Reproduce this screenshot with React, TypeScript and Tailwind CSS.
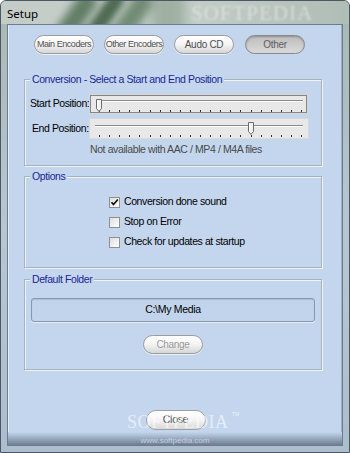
import React from "react";

const sans = "font-['Liberation_Sans',Arial,sans-serif]";

function Pill({ label, pressed, disabled, small }: { label: string; pressed?: boolean; disabled?: boolean; small?: boolean }) {
  const txt = small ? "text-[9px] tracking-[-0.45px]" : "text-[10px] tracking-[-0.3px]";
  if (pressed) {
    return (
      <div className={"h-[19px] w-[60px] rounded-full border border-[#8a8a8a] bg-linear-to-b from-[#bdbdbd] to-[#dadada] shadow-[inset_0_1px_2px_rgba(0,0,0,0.25)] flex items-center justify-center whitespace-nowrap text-[#5e5e5e] " + txt}>
        {label}
      </div>
    );
  }
  return (
    <div
      className={
        "h-[19px] w-[60px] rounded-full border border-[#9c9c9c] bg-linear-to-b from-[#ffffff] via-[#f4f4f4] to-[#d6d6d6] shadow-[0_1px_0_rgba(255,255,255,0.6)] flex items-center justify-center whitespace-nowrap " +
        txt +
        (disabled ? " text-[#9a9a9a]" : " text-[#4f4f4f]")
      }
    >
      {label}
    </div>
  );
}

function Slider({ w, h, trackY, x0, x1, thumbX, thumbY, tickY, focus }: { w: number; h: number; trackY: number; x0: number; x1: number; thumbX: number; thumbY: number; tickY: number; focus?: boolean }) {
  const ticks = Array.from({ length: 21 }, (_, i) => 10 + i * 10.1);
  return (
    <svg width={w} height={h} className="block shrink-0">
      <rect x="0" y="0" width={w} height={h} fill="#e8e8e8" />
      <rect x="0.5" y="0.5" width={w - 1} height={h - 1} fill="none" stroke="#d8d8d8" />
      {focus && <rect x="1.5" y="1.5" width={w - 3} height={h - 3} fill="none" stroke="#222" strokeDasharray="1 1" />}
      <line x1={x0} y1={trackY + 0.5} x2={x1} y2={trackY + 0.5} stroke="#8a8a8a" />
      <line x1={x0} y1={trackY + 1.5} x2={x1} y2={trackY + 1.5} stroke="#ffffff" />
      {ticks.map((t, i) => (
        <rect key={i} x={Math.round(t)} y={tickY} width="1" height="2" fill="#333" />
      ))}
      <polygon
        points={`${thumbX},${thumbY} ${thumbX + 5},${thumbY} ${thumbX + 5},${thumbY + 9} ${thumbX + 2.5},${thumbY + 12} ${thumbX},${thumbY + 9}`}
        fill="#f2f2f2"
        stroke="#6a6a6a"
        strokeWidth="1"
      />
      <line x1={thumbX + 1} y1={thumbY + 1} x2={thumbX + 1} y2={thumbY + 9} stroke="#ffffff" />
    </svg>
  );
}

function Check({ checked, label }: { checked?: boolean; label: string }) {
  return (
    <div className="h-[20px] flex items-center">
      <div className="w-[11px] h-[11px] border border-[#8e8f8f] bg-linear-to-br from-[#dedede] to-[#ffffff] flex items-center justify-center">
        {checked && (
          <svg width="9" height="9" viewBox="0 0 9 9">
            <path d="M1.5 4.2 L3.5 6.5 L7.8 1.5" fill="none" stroke="#111" strokeWidth="1.7" />
          </svg>
        )}
      </div>
      <span className="ml-[4px] text-[10.5px] tracking-[-0.4px] whitespace-nowrap text-black">{label}</span>
    </div>
  );
}

function Group({ title, children, className }: { title: string; children: React.ReactNode; className?: string }) {
  return (
    <div className={"relative ml-[16px] w-[298px] border border-[#a9b3be] shadow-[inset_1px_1px_0_#eef3f9,1px_1px_0_#eef3f9] " + (className || "")}>
      <span className="absolute left-[5px] top-[-8px] px-[2px] bg-[#c4d6ee] text-[10.5px] tracking-[-0.4px] whitespace-nowrap leading-[14px] text-[#1a2596]">{title}</span>
      {children}
    </div>
  );
}

export default function App() {
  return (
    <div className={"w-[350px] h-[453px] overflow-hidden flex flex-col bg-linear-to-b from-[#a9b7b2] via-[#b8c6d4] to-[#aebdcd] border border-[#4a5866] rounded-t-[6px] relative " + sans}>
      {/* title bar */}
      <div className="relative h-[23px] flex items-center pl-[6px] pt-[3px] bg-linear-to-r from-[#c4ccc8] via-[#c6cfca] to-[#b0bcb6] overflow-hidden">
        <div className="absolute left-[66px] top-[-10px] w-[20px] h-[50px] rotate-[35deg] bg-[#4a6a4c]/80 blur-[4px]" />
        <div className="absolute left-[96px] top-[-10px] w-[16px] h-[50px] rotate-[35deg] bg-[#3b5b3e]/85 blur-[3px]" />
        <div className="absolute left-[122px] top-[-10px] w-[20px] h-[50px] rotate-[35deg] bg-[#557557]/75 blur-[4px]" />
        <div className="absolute left-[150px] top-[-10px] w-[34px] h-[50px] bg-[#7f9883]/55 blur-[6px]" />
        <span className="absolute left-[190px] top-[2px] text-[21px] leading-[21px] tracking-[1px] text-[#eef2ef]/55 blur-[1.2px] font-['Liberation_Serif',serif] whitespace-nowrap">SOFTPEDIA</span>
        <span className="relative text-[11.5px] text-black font-['Noto_Sans',sans-serif]">Setup</span>
      </div>

      {/* client */}
      <div className="flex-1 mx-[6px] mb-[6px] border border-[#6b7c8f] bg-[#c4d6ee] flex flex-col shadow-[inset_1px_0_0_#e4edf8,inset_-1px_0_0_#9fb0c6]">
        <div className="mt-[10px] pl-[26px] flex gap-[10px]">
          <Pill label="Main Encoders" small />
          <Pill label="Other Encoders" small />
          <Pill label="Audo CD" />
          <div className="ml-px">
            <Pill label="Other" pressed />
          </div>
        </div>

        <Group title="Conversion - Select a Start and End Position" className="mt-[25px] pt-[14px] pb-[9px]">
          <div className="flex items-center h-[20px]">
            <span className="pl-[5px] w-[64px] shrink-0 whitespace-nowrap text-[10.5px] tracking-[-0.4px] text-black">Start Position:</span>
            <Slider w={219} h={20} trackY={6} x0={8} x1={214} thumbX={7.5} thumbY={5.5} tickY={16} focus />
          </div>
          <div className="flex items-center h-[21px] mt-[4px]">
            <span className="pl-[7px] w-[64px] shrink-0 whitespace-nowrap text-[10.5px] tracking-[-0.4px] text-black">End Position:</span>
            <Slider w={220} h={21} trackY={7} x0={6} x1={214} thumbX={159.5} thumbY={4.5} tickY={17} />
          </div>
          <div className="mt-[4px] pl-[65px] h-[13px] leading-[13px] whitespace-nowrap text-[10.5px] tracking-[-0.4px] text-[#4a4a4a]">Not available with AAC / MP4 / M4A files</div>
        </Group>

        <Group title="Options" className="mt-[10px] pt-[15px] pb-[15px]">
          <div className="pl-[84px]">
            <Check checked label="Conversion done sound" />
            <Check label="Stop on Error" />
            <Check label="Check for updates at startup" />
          </div>
        </Group>

        <Group title="Default Folder" className="mt-[11px] pt-[18px] pb-[15px]">
          <div className="ml-[6px] w-[284px] h-[24px] rounded-[3px] border border-[#8797ae] bg-[#c2d4ec] shadow-[inset_0_1px_1px_rgba(0,0,0,0.12),0_1px_0_#e3ecf7] flex items-center justify-center text-[10.5px] tracking-[-0.3px] text-black">
            C:\My Media
          </div>
          <div className="mt-[13px] flex justify-center">
            <Pill label="Change" disabled />
          </div>
        </Group>

        <div className="relative mt-[40px] flex justify-center">
          <div className="ml-[1px] h-[20px] w-[60px] rounded-full border border-[#a0a0a0] bg-linear-to-b from-[#ffffff] via-[#f4f4f4] to-[#d8d8d8] flex items-center justify-center text-[10.5px] tracking-[-0.3px] text-[#555]">
            Close
          </div>
          <span className="absolute left-[119px] top-[3px] text-[18px] leading-[18px] tracking-[0.5px] text-white/55 font-['Liberation_Serif',serif] whitespace-nowrap pointer-events-none">SOFTPEDIA</span>
          <span className="absolute left-[224px] top-[1px] text-[5px] leading-[6px] text-white/70">TM</span>
        </div>

        <div className="mt-auto h-[13px] bg-linear-to-b from-[#c4d6ee] via-[#99aabf] to-[#6d7d92] flex items-end justify-center">
          <span className="text-[8px] leading-[10px] text-[#d7dfe8]/80 -mb-px">www.softpedia.com</span>
        </div>
      </div>
    </div>
  );
}
